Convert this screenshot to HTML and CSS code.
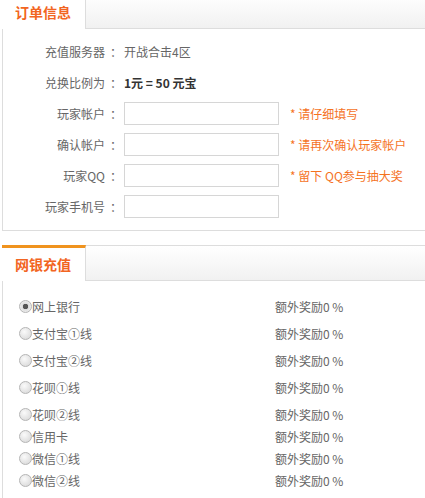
FILE: index.html
```html
<!DOCTYPE html>
<html lang="zh-CN">
<head>
  <meta charset="UTF-8" />
  <title>充值</title>
  <link rel="stylesheet" href="styles.css">
</head>
<body>
  <!-- 订单信息 -->
  <div class="panel panel-first">
    <div class="panel-head">
      <div class="panel-tab">订单信息</div>
    </div>
    <div class="panel-body order-body">
      <div class="form-row">
        <span class="form-label">充值服务器<span class="colon">：</span></span>
        <span class="form-value">开战合击4区</span>
      </div>
      <div class="form-row">
        <span class="form-label">兑换比例为<span class="colon">：</span></span>
        <span class="form-value rate">1元 = 50 元宝</span>
      </div>
      <div class="form-row">
        <span class="form-label">玩家帐户<span class="colon">：</span></span>
        <input type="text" class="form-input" />
        <span class="form-tip">* 请仔细填写</span>
      </div>
      <div class="form-row">
        <span class="form-label">确认帐户<span class="colon">：</span></span>
        <input type="text" class="form-input" />
        <span class="form-tip">* 请再次确认玩家帐户</span>
      </div>
      <div class="form-row">
        <span class="form-label">玩家QQ<span class="colon">：</span></span>
        <input type="text" class="form-input" />
        <span class="form-tip">* 留下 QQ参与抽大奖</span>
      </div>
      <div class="form-row">
        <span class="form-label">玩家手机号<span class="colon">：</span></span>
        <input type="text" class="form-input" />
      </div>
    </div>
  </div>

  <!-- 网银充值 -->
  <div class="panel">
    <div class="panel-head">
      <div class="panel-tab">网银充值</div>
    </div>
    <div class="panel-body pay-body">
      <label class="pay-row loose">
        <span class="pay-name"><input type="radio" name="pay" checked />网上银行</span>
        <span class="pay-bonus">额外奖励0 %</span>
      </label>
      <label class="pay-row loose">
        <span class="pay-name"><input type="radio" name="pay" />支付宝①线</span>
        <span class="pay-bonus">额外奖励0 %</span>
      </label>
      <label class="pay-row loose">
        <span class="pay-name"><input type="radio" name="pay" />支付宝②线</span>
        <span class="pay-bonus">额外奖励0 %</span>
      </label>
      <label class="pay-row loose">
        <span class="pay-name"><input type="radio" name="pay" />花呗①线</span>
        <span class="pay-bonus">额外奖励0 %</span>
      </label>
      <label class="pay-row">
        <span class="pay-name"><input type="radio" name="pay" />花呗②线</span>
        <span class="pay-bonus">额外奖励0 %</span>
      </label>
      <label class="pay-row">
        <span class="pay-name"><input type="radio" name="pay" />信用卡</span>
        <span class="pay-bonus">额外奖励0 %</span>
      </label>
      <label class="pay-row">
        <span class="pay-name"><input type="radio" name="pay" />微信①线</span>
        <span class="pay-bonus">额外奖励0 %</span>
      </label>
      <label class="pay-row">
        <span class="pay-name"><input type="radio" name="pay" />微信②线</span>
        <span class="pay-bonus">额外奖励0 %</span>
      </label>
    </div>
  </div>
</body>
</html>
```

FILE: styles.css
```css
body {
  margin: 0;
  font-family: "Noto Sans CJK SC", "Liberation Sans", sans-serif;
  font-size: 12px;
  color: #666;
  background-color: #fff;
  overflow: hidden;
}

.panel {
  margin: 0 -10px 14px 2px;
  border: 1px solid #ddd;
  border-right: none;
}

.panel-first {
  margin-top: -7px;
}

.panel-head {
  height: 34px;
  background: linear-gradient(#ffffff, #f1f1f1);
  border-bottom: 1px solid #ddd;
  display: flex;
}

.panel-tab {
  width: 84px;
  height: 36px;
  margin: -1px 0 -1px -1px;
  padding-left: 13px;
  box-sizing: border-box;
  background-color: #fff;
  border-top: 3px solid #f0931e;
  border-right: 1px solid #ddd;
  color: #f26522;
  font-size: 14px;
  font-weight: bold;
  line-height: 33px;
}

.order-body {
  padding: 7px 0 8px;
}

.form-row {
  display: flex;
  align-items: center;
  height: 31px;
}

.form-label {
  width: 114px;
  text-align: right;
  margin-right: 7px;
}

/* full-width colon sits at the left of its cell here, nudge it to the middle */
.colon {
  padding-left: 5px;
  margin-right: -5px;
}

.rate {
  font-weight: bold;
  color: #333;
}

.form-input {
  width: 155px;
  height: 23px;
  box-sizing: border-box;
  border: 1px solid #d6d6d6;
  padding: 0 4px;
  margin: 0;
  font-size: 12px;
}

.form-tip {
  margin-left: 11px;
  color: #f5731f;
}

.pay-body {
  padding: 14px 0 20px 16px;
}

.pay-row {
  display: flex;
  align-items: center;
  height: 22px;
}

.pay-row.loose {
  margin-bottom: 5px;
}

.pay-name {
  width: 256px;
  display: flex;
  align-items: center;
}

.pay-name input[type="radio"] {
  appearance: none;
  -webkit-appearance: none;
  width: 13px;
  height: 13px;
  margin: 0;
  border-radius: 50%;
  border: 1px solid #b5b5b5;
  background: radial-gradient(circle at 40% 35%, #fafafa, #d4d4d4);
  box-sizing: border-box;
}

.pay-name input[type="radio"]:checked {
  background: radial-gradient(circle, #555 0, #555 2.5px, #dcdcdc 3px, #f0f0f0 6px);
}
```
